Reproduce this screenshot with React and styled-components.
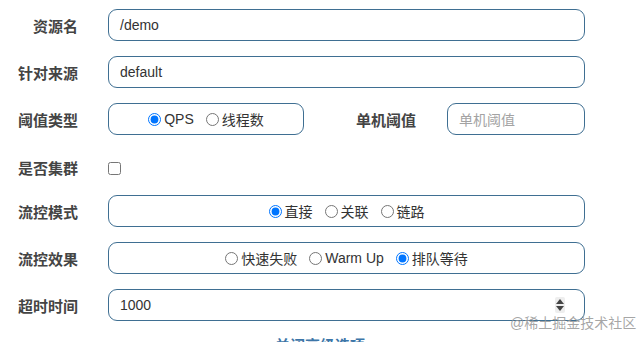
import React from "react";
import styled, { createGlobalStyle } from "styled-components";

const Global = createGlobalStyle`
  html, body { margin: 0; padding: 0; background: #fff; }
  body {
    font-family: "Liberation Sans", "Noto Sans CJK SC", sans-serif;
    font-size: 14px;
    color: #333;
    overflow: hidden;
  }
`;

const Page = styled.div`
  position: relative;
  width: 643px;
  height: 342px;
  overflow: hidden;
`;

const Form = styled.form`
  display: flex;
  flex-direction: column;
  gap: 15px;
  padding-top: 9px;
`;

const Row = styled.div`
  display: grid;
  grid-template-columns: 93px 477px;
  column-gap: 15px;
  align-items: ${(p) => (p.$top ? "start" : "center")};
  height: ${(p) => p.$h || 32}px;
`;

const Label = styled.label`
  text-align: right;
  padding-right: 15px;
  font-size: 15px;
  font-weight: bold;
  color: #444;
  white-space: nowrap;
  padding-top: ${(p) => p.$pt || 0}px;
`;

const Box = styled.div`
  box-sizing: border-box;
  height: 32px;
  width: ${(p) => (p.$w ? `${p.$w}px` : "100%")};
  border: 1px solid #3f6f92;
  border-radius: 9px;
  display: flex;
  align-items: center;
  justify-content: ${(p) => (p.$center ? "center" : "flex-start")};
  padding: 0 11px;
  font-size: 14px;
  color: #333;
`;

const Placeholder = styled.span`
  color: #a3a3a3;
`;

const InlineControls = styled.div`
  display: flex;
  align-items: center;
`;

const SubLabel = styled.span`
  margin-left: 52px;
  margin-right: 31px;
  font-size: 15px;
  font-weight: bold;
  color: #444;
  white-space: nowrap;
`;

const Option = styled.label`
  display: inline-flex;
  align-items: center;
  gap: 3px;
  margin-right: 12px;
  white-space: nowrap;
  &:last-child { margin-right: 0; }
  input { margin: 0; width: 13px; height: 13px; }
`;

const Check = styled.input`
  margin: 12px 0 0 0;
  width: 13px;
  height: 13px;
`;

const Grow = styled.span`
  flex: 1;
`;

const Spinner = styled.span`
  display: flex;
  flex-direction: column;
  align-items: center;
  justify-content: center;
  gap: 2px;
  width: 10px;
  height: 16px;
  background: #eeeeee;
  margin-right: 8px;
  border-radius: 2px;
`;

const More = styled.div`
  text-align: center;
  margin-top: 13px;
  padding-right: 3px;
  font-size: 15px;
  color: #3d76a8;
  font-weight: bold;
`;

const Watermark = styled.div`
  position: absolute;
  left: 510px;
  top: 312px;
  font-size: 14px;
  color: rgba(150, 150, 150, 0.85);
  white-space: nowrap;
`;

function Radio({ name, checked, children }) {
  return (
    <Option>
      <input type="radio" name={name} defaultChecked={checked} />
      {children}
    </Option>
  );
}

export default function App() {
  return (
    <Page>
      <Global />
      <Form onSubmit={(e) => e.preventDefault()}>
        <Row>
          <Label>资源名</Label>
          <Box>/demo</Box>
        </Row>
        <Row>
          <Label>针对来源</Label>
          <Box>default</Box>
        </Row>
        <Row>
          <Label>阈值类型</Label>
          <InlineControls>
            <Box $w={196} $center>
              <Radio name="grade" checked>QPS</Radio>
              <Radio name="grade">线程数</Radio>
            </Box>
            <SubLabel>单机阈值</SubLabel>
            <Box $w={138}>
              <Placeholder>单机阈值</Placeholder>
            </Box>
          </InlineControls>
        </Row>
        <Row $h={30} $top>
          <Label $pt={7}>是否集群</Label>
          <div>
            <Check type="checkbox" />
          </div>
        </Row>
        <Row>
          <Label>流控模式</Label>
          <Box $center>
            <Radio name="strategy" checked>直接</Radio>
            <Radio name="strategy">关联</Radio>
            <Radio name="strategy">链路</Radio>
          </Box>
        </Row>
        <Row>
          <Label>流控效果</Label>
          <Box $center>
            <Radio name="behavior">快速失败</Radio>
            <Radio name="behavior">Warm Up</Radio>
            <Radio name="behavior" checked>排队等待</Radio>
          </Box>
        </Row>
        <Row>
          <Label>超时时间</Label>
          <Box>
            <Grow>1000</Grow>
            <Spinner>
              <svg width="8" height="5" viewBox="0 0 8 5"><path d="M4 0 L8 5 L0 5 Z" fill="#444" /></svg>
              <svg width="8" height="5" viewBox="0 0 8 5"><path d="M0 0 L8 0 L4 5 Z" fill="#444" /></svg>
            </Spinner>
          </Box>
        </Row>
      </Form>
      <More>关闭高级选项</More>
      <Watermark>@稀土掘金技术社区</Watermark>
    </Page>
  );
}
